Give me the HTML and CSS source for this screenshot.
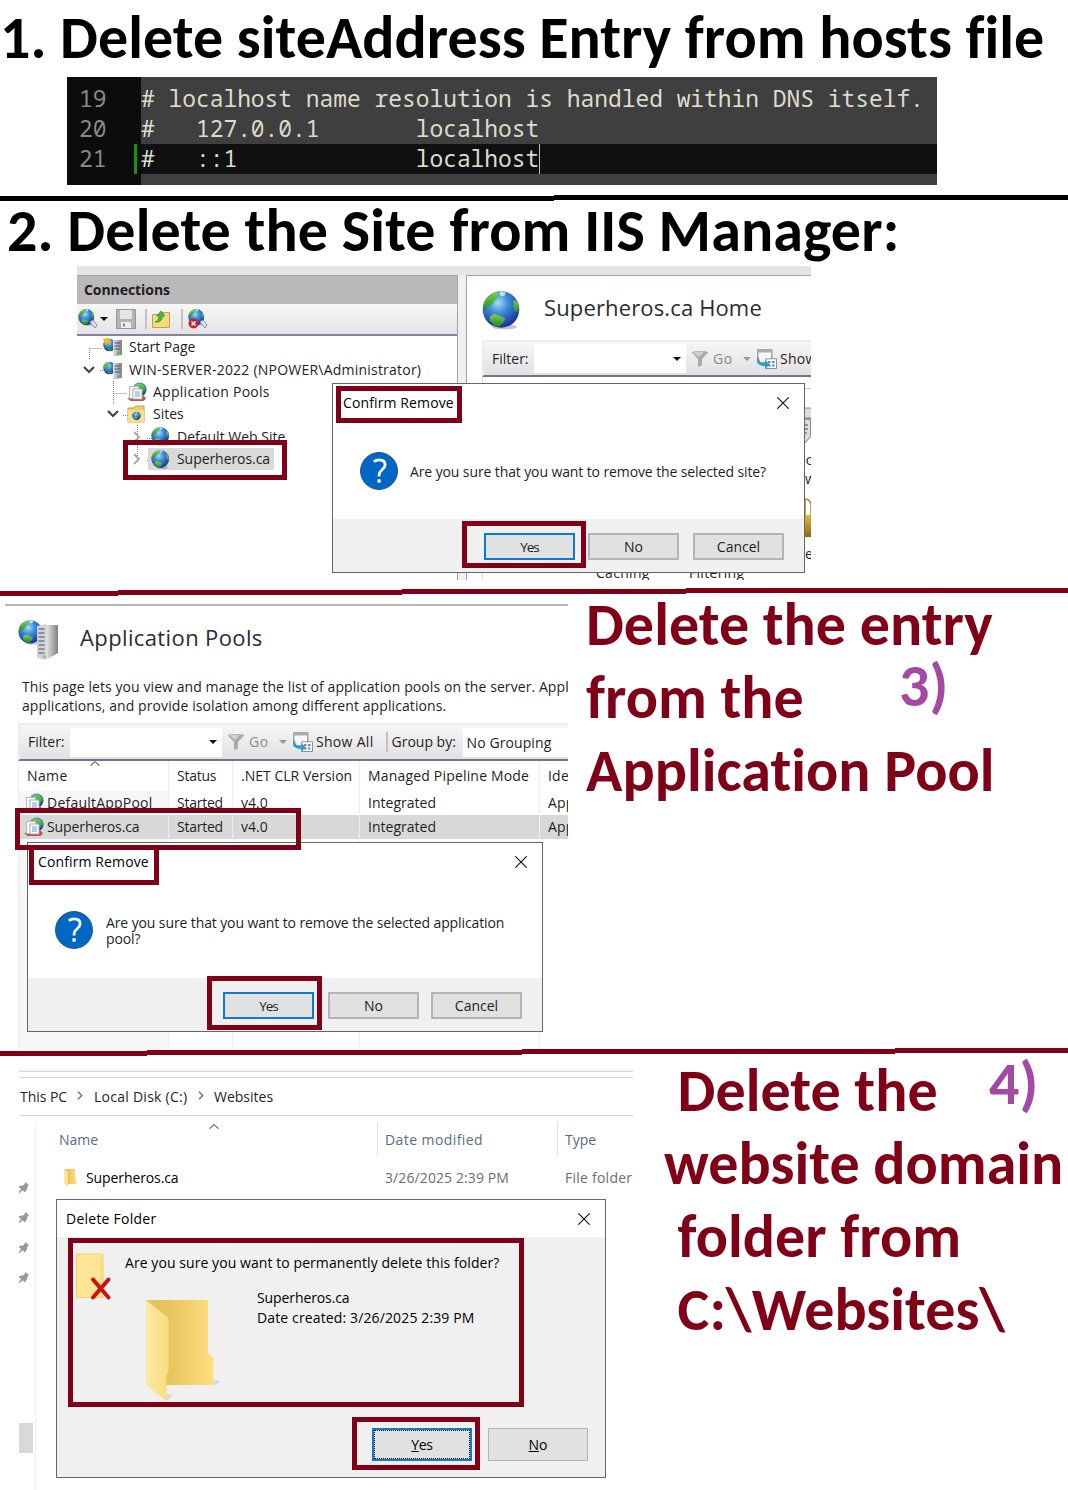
FILE: index.html
```html
<!DOCTYPE html>
<html lang="en">
<head>
<meta charset="utf-8">
<title>Removing an IIS site</title>
<link rel="stylesheet" href="styles.css">
</head>
<body>
<svg class="defs" width="0" height="0" aria-hidden="true">
  <defs>
    <radialGradient id="sea" cx="42%" cy="32%" r="68%"><stop offset="0" stop-color="#a8dcf8"/><stop offset=".4" stop-color="#3f8fdc"/><stop offset="1" stop-color="#1a2f98"/></radialGradient>
    <linearGradient id="land" x1="0" y1="0" x2="0" y2="1"><stop offset="0" stop-color="#7ed050"/><stop offset="1" stop-color="#1f8a2c"/></linearGradient>
    <linearGradient id="metal" x1="0" y1="0" x2="1" y2="0"><stop offset="0" stop-color="#e4e6e6"/><stop offset="1" stop-color="#7d8286"/></linearGradient>
    <linearGradient id="foldBack" x1="0" y1="0" x2="1" y2="0"><stop offset=".3" stop-color="#e5c35c"/><stop offset="1" stop-color="#ffe07f"/></linearGradient>
    <linearGradient id="foldFront" x1="0" y1="0" x2="1" y2="0"><stop offset="0" stop-color="#ffe9a4"/><stop offset="1" stop-color="#fbdc7c"/></linearGradient>
    <linearGradient id="lock" x1="0" y1="0" x2="0" y2="1"><stop offset="0" stop-color="#e0b83c"/><stop offset="1" stop-color="#8d6a10"/></linearGradient>
    <symbol id="globe" viewBox="0 0 38 38">
      <ellipse cx="22" cy="35" rx="12" ry="2.5" fill="#000" opacity=".22"/>
      <circle cx="18.500" cy="18" r="17.800" fill="url(#sea)"/>
      <path d="M1.500 13C3 7 8 2.500 14 1l2.500 1.500L14 5l1 2-3.500 3-2 3.500-4 1L3 19l-2-1z" fill="url(#land)"/>
      <path d="M17 .4l6 1-1 3-3 1-2-2z" fill="#c5e8d0"/>
      <path d="M31 9l2.500 1c2.500 4 3 8 1.500 11l-3-1-1.500-4z" fill="url(#land)"/>
      <path d="M7.500 25l4-2.800 6 1.800 5.500 3.500-2.500 3.500-3.500 3.500-4.500-.5-5-5.500z" fill="url(#land)"/>
    </symbol>
    <symbol id="server" viewBox="0 0 20 20">
      <circle cx="6.500" cy="8" r="6.300" fill="url(#sea)"/>
      <path d="M1 6c1-3 4-4.500 6-4L5 5l1 2-3 3zM4 12l3-1 2 1-1 2-2 0z" fill="url(#land)"/>
      <path d="M10 3h9v15l-9 1.500z" fill="url(#metal)"/>
      <path d="M11.500 6h6M11.500 9h6M11.500 12h6" stroke="#55595c" stroke-width="1"/>
      <path d="M14 15.500h2.500v2H14z" fill="#3cc03c"/>
    </symbol>
    <symbol id="pool" viewBox="0 0 20 20">
      <circle cx="12.500" cy="7.500" r="7" fill="url(#sea)"/>
      <path d="M12 1l5 2 2 4-3 4-2-4-3-2zM7 3l3-2 1 3-3 3z" fill="url(#land)"/>
      <path d="M.5 16.500l4-3h12l2.500 3-2.500 2.500h-13z" fill="#c4504a"/>
      <path d="M2.500 4.500h9v12h-9z" fill="#f6f8fa" stroke="#b4bcc6"/>
      <path d="M6 7h9v10H6z" fill="#fff" stroke="#a4aebb"/>
      <path d="M8 10h5M8 12h5M8 14h5" stroke="#6e9ad0"/>
    </symbol>
    <symbol id="funnel" viewBox="0 0 18 18">
      <path d="M.5 2C3 .5 15 .5 17.500 2L11 9v6.500L7 17V9z" fill="#a9a9a9"/><path d="M2 2.300C5 1.200 11 1.300 13 2L8 7z" fill="#cfcfcf"/>
    </symbol>
    <symbol id="showall" viewBox="0 0 20 20">
      <path d="M.8.8h14v13H.8z" fill="#fafafa" stroke="#8b9096" stroke-width="1.200"/><path d="M1 1h14v2.500H1z" fill="#a9adb3"/>
      <path d="M8.800 9.800h10.700v9.700H8.800z" fill="#fff" stroke="#8b9096"/><path d="M11 13h2.500M15 13h2.500M11 16.500h2.500M15 16.500h2.500" stroke="#7382c0" stroke-width="1.800"/>
      <path d="M2 8c0 5 2 6 6 6v-3l5 4.500L8 20v-3C2 17 0 14 .5 9z" fill="#2f9ad4"/>
    </symbol>
    <symbol id="question" viewBox="0 0 38 38">
      <circle cx="19" cy="19" r="18.500" fill="#0067c5" stroke="#1b4f85" stroke-width=".9"/>
      <path d="M13.800 9.800c1.500-1.300 3.400-1.900 5.400-1.900 3.600 0 5.900 1.900 5.900 4.900 0 5-6 5-6 10.100v1.500" fill="none" stroke="#fff" stroke-width="2.800"/><path d="M17.400 27.300h3.300v3.300h-3.300z" fill="#fff"/>
    </symbol>
    <symbol id="close" viewBox="0 0 12 12"><path d="M.3.3l11.400 11.400M11.700.3L.3 11.700" stroke="#111" stroke-width="1.100" fill="none"/></symbol>
    <symbol id="open" viewBox="0 0 12 8"><path d="M1 1l5 5 5-5" fill="none" stroke="#444" stroke-width="2.200"/></symbol>
    <symbol id="closed" viewBox="0 0 8 12"><path d="M1 1l5 5-5 5" fill="none" stroke="#a8a8a8" stroke-width="1.800"/></symbol>
    <symbol id="crumb" viewBox="0 0 6 9"><path d="M1 .8l3.700 3.700L1 8.200" fill="none" stroke="#777" stroke-width="1.500"/></symbol>
    <symbol id="pin" viewBox="0 0 10 12"><path d="M6.500 0L10 3.300 8.600 4.200 7.800 7.600 5.800 10.500 3.600 8.300 0 11.500V9.700L2 7 0 5.300V4.200L5 3z" fill="#8f9ba3"/></symbol>
    <symbol id="sort" viewBox="0 0 10 5"><path d="M.5 4.700L5 .7l4.500 4" fill="none" stroke="#666" stroke-width="1.100"/></symbol>
    <symbol id="folder" viewBox="0 0 76 102">
      <path d="M67.500 80l7 1-4 3.500-3 .5zM20.500 94l6 .5-3 4-3 2.500z" fill="#000" opacity=".1"/>
      <path d="M0 0h62v53l5.500 5v27H20z" fill="url(#foldBack)"/>
      <path d="M0 0l22.500 18v54l-2 4v25L0 85z" fill="url(#foldFront)"/>
    </symbol>
  </defs>
</svg>

<main class="guide">
  <section class="step step-hosts">
    <h1 class="headline first">1. Delete siteAddress Entry from hosts file</h1>
    <div class="editor">
      <div class="line"><span class="num">19</span><code># localhost name resolution is handled within DNS itself.</code></div>
      <div class="line"><span class="num">20</span><code>#   127.0.0.1       localhost</code></div>
      <div class="line current"><span class="num">21</span><code>#   ::1             localhost<i class="caret"></i></code></div>
      <div class="line rest"><span class="num"></span><code></code></div>
    </div>
  </section>

  <svg class="rule rule-thin" viewBox="0 0 1068 6"><path d="M0 1h554V0h514v5H554v1H0z"/></svg>

  <section class="step step-site">
    <h1 class="headline tight">2. Delete the Site from IIS Manager:</h1>
    <div class="shot iis">
      <div class="iis-top"></div>
      <div class="iis-body">
        <div class="connections">
          <div class="pane-title">Connections</div>
          <div class="pane-tools">
            <svg class="t-globe" viewBox="0 0 20 20"><use href="#globe" width="17" height="17"/><path d="M12 13l3-2 4 5-2 3z" fill="#dfe6ea" stroke="#8494a0"/></svg>
            <i class="drop"></i>
            <svg class="t-save" viewBox="0 0 20 20"><path d="M.5.5h19v19H.5z" fill="#b3b3b3" stroke="#969696"/><path d="M4 1h12v9H4z" fill="#e6e6e6"/><path d="M5 13h10v6H5z" fill="#ededed"/><path d="M7 14.500h2v3H7z" fill="#888"/></svg>
            <i class="split"></i>
            <svg class="t-up" viewBox="0 0 18 18"><path d="M.5 4.500h8l1-2h8v15H.5z" fill="#f6da7e" stroke="#c3a045"/><path d="M3 12C6 11 7 8 7 6H4.500L9 1l4 5h-2.500c0 4-3 7-7.500 6z" fill="#43b649" stroke="#25802c" stroke-width=".6"/></svg>
            <i class="split wide"></i>
            <svg class="t-stop" viewBox="0 0 20 20"><use href="#globe" width="17" height="17"/><path d="M12 13l3-2 4 5-2 3z" fill="#dfe6ea" stroke="#8494a0"/><circle cx="5.500" cy="14.500" r="5" fill="#cf1f27"/><path d="M3.500 12.500l4 4m0-4l-4 4" stroke="#fff" stroke-width="1.500"/></svg>
          </div>
          <div class="tree">
            <svg class="tree-lines" viewBox="0 0 110 135"><path d="M12.500 12v12M12.500 12.500H26M23 34.500h4M36.500 45v24M36.500 57.500H50M46 79.500h5M60.500 89v38M70 102.500h5M70 124.500h5" fill="none" stroke="#888" stroke-dasharray="1 1"/></svg>
            <div class="node"><span class="twist"></span><svg class="ico" viewBox="0 0 20 20"><use href="#server"/><path d="M0 1l3 1 2-2 1 3 3 1-3 2-3 2-2-3z" fill="#f3b52b"/></svg><span>Start Page</span></div>
            <div class="node"><svg class="twist"><use href="#open" y="2" width="12" height="8"/></svg><svg class="ico"><use href="#server"/></svg><span class="wide2">WIN-SERVER-2022 (NPOWER\Administrator)</span></div>
            <div class="node lv1"><span class="twist"></span><svg class="ico"><use href="#pool"/></svg><span class="wide3">Application Pools</span></div>
            <div class="node lv1"><svg class="twist"><use href="#open" y="2" width="12" height="8"/></svg><svg class="ico" viewBox="0 0 20 20"><path d="M1 4h6l1.500-2H17v16H1z" fill="#f0cd6a" stroke="#c8a040"/><path d="M1 6h16v12H1z" fill="#f9df90"/><use href="#globe" x="5" y="7.500" width="9" height="9"/></svg><span>Sites</span></div>
            <div class="node lv2"><svg class="twist"><use href="#closed" x="2" width="8" height="12"/></svg><svg class="ico"><use href="#globe"/></svg><span>Default Web Site</span></div>
            <div class="node lv2 picked"><svg class="twist"><use href="#closed" x="2" width="8" height="12"/></svg><svg class="ico"><use href="#globe"/></svg><span>Superheros.ca</span></div>
          </div>
        </div>
        <div class="home">
          <div class="home-head"><svg class="big-globe"><use href="#globe"/></svg><span class="title t-home">Superheros.ca Home</span></div>
          <div class="filter home-filter">
            <span class="f-label">Filter:</span><span class="f-input"><i class="drop"></i></span>
            <svg class="f-funnel"><use href="#funnel"/></svg><span class="f-go">Go</span><i class="drop dim"></i>
            <svg class="f-show"><use href="#showall"/></svg><span class="f-all">Show</span>
          </div>
          <div class="features">
            <span class="feat c1">Caching</span><span class="feat c2">Filtering</span>
            <span class="edge e1">ec</span><span class="edge e2">w</span><span class="edge e3">e</span>
            <svg class="edge-art" viewBox="0 0 7 160"><path d="M0 1.500h7" stroke="#c8c8d4"/><path d="M0 21h7v28L0 57z" fill="#dcdedf"/><path d="M0 32h6M0 38h3M0 42h3M0 46h2" stroke="#4a4a4a" stroke-width="1.200"/><path d="M0 21h7M0 31h7M5.500 33v16L0 56" stroke="#8a8a8a" fill="none"/><path d="M0 130V112q5 0 6 6v12" fill="#fff" stroke="#a5882a" stroke-width="1.500"/><path d="M0 128h7v22H0z" fill="url(#lock)"/></svg>
          </div>
        </div>
      </div>

      <div class="dialog dlg-site">
        <div class="dlg-title"><span class="wide1">Confirm Remove</span><svg class="x"><use href="#close"/></svg></div>
        <div class="dlg-body"><svg class="q"><use href="#question"/></svg><p>Are you sure that you want to remove the selected site?</p></div>
        <div class="dlg-foot"><span class="btn default yes">Yes</span><span class="btn no">No</span><span class="btn">Cancel</span></div>
      </div>
      <i class="mark m-tree"></i><i class="mark m-title"></i><i class="mark m-yes"></i>
    </div>
  </section>

  <svg class="rule" viewBox="0 0 1068 8"><path fill="#800018" d="M0 3h118V2h284V1h284V0h382v5H686v1H402v1H118v1H0z"/></svg>

  <section class="step step-pool">
    <div class="shot pools">
      <div class="pools-head"><svg class="pool-logo" viewBox="0 0 42 42"><use href="#globe" width="25" height="25"/><path d="M19 6l9-2v36l-9-2z" fill="#cfd3d5"/><path d="M28 5h12v28l-12 7z" fill="url(#metal)"/><path d="M20.500 9h6M20.500 13h6M20.500 17h6M20.500 21h6M20.500 25h6M20.500 29h6M20.500 33h6" stroke="#777d82" stroke-width="1.300"/><path d="M25 35l3 1v2l-3-1z" fill="#6bd03c"/></svg><span class="title t-pools">Application Pools</span></div>
      <p class="about">This page lets you view and manage the list of application pools on the server. Appl<br><span>applications, and provide isolation among different applications.</span></p>
      <div class="filter pool-filter">
        <span class="f-label">Filter:</span><span class="f-input"><i class="drop"></i></span>
        <svg class="f-funnel"><use href="#funnel"/></svg><span class="f-go">Go</span><i class="drop dim"></i>
        <svg class="f-show"><use href="#showall"/></svg><span class="f-all">Show All</span>
        <i class="split"></i><span class="f-group">Group by:</span><span class="f-combo">No Grouping</span>
      </div>
      <div class="table">
        <svg class="sorted"><use href="#sort"/></svg>
        <div class="tr th"><span class="n">Name</span><span class="s">Status</span><span class="v">.NET CLR Version</span><span class="m">Managed Pipeline Mode</span><span>Ide</span></div>
        <div class="tr"><span class="nm"><svg class="ico"><use href="#pool"/></svg><b class="wide3">DefaultAppPool</b></span><span class="s">Started</span><span class="v">v4.0</span><span class="i">Integrated</span><span>App</span></div>
        <div class="tr on"><span class="nm"><svg class="ico"><use href="#pool"/></svg><b>Superheros.ca</b></span><span class="s">Started</span><span class="v">v4.0</span><span class="i">Integrated</span><span>App</span></div>
        <div class="tr fill"><span></span><span></span><span></span><span></span><span></span></div>
      </div>
      <div class="dialog dlg-pool">
        <div class="dlg-title"><span class="wide1">Confirm Remove</span><svg class="x"><use href="#close"/></svg></div>
        <div class="dlg-body"><svg class="q"><use href="#question"/></svg><p>Are you sure that you want to remove the selected application<br>pool?</p></div>
        <div class="dlg-foot"><span class="btn default yes">Yes</span><span class="btn no">No</span><span class="btn">Cancel</span></div>
      </div>
      <i class="mark m-row"></i><i class="mark m-title"></i><i class="mark m-yes"></i>
    </div>
    <h2 class="headline side">Delete the entry
from the
Application Pool</h2>
    <span class="headline badge b3">3)</span>
  </section>

  <svg class="rule" viewBox="0 0 1068 8"><path fill="#800018" d="M0 3h147V2h375V1h373V0h173v5H895v1H522v1H147v1H0z"/></svg>

  <section class="step step-folder">
    <div class="shot explorer">
      <div class="bar"></div>
      <div class="crumbs"><span class="k1">This PC</span><svg><use href="#crumb"/></svg><span class="k2">Local Disk (C:)</span><svg><use href="#crumb"/></svg><span class="k3">Websites</span></div>
      <div class="ex-body">
        <div class="nav">
          <svg><use href="#pin"/></svg><svg><use href="#pin"/></svg><svg><use href="#pin"/></svg><svg><use href="#pin"/></svg>
          <i class="thumb"></i>
        </div>
        <div class="files">
          <svg class="sorted"><use href="#sort"/></svg>
          <div class="fr fh"><span>Name</span><span class="dm">Date modified</span><span>Type</span></div>
          <div class="fr"><span class="fname"><svg viewBox="0 0 13 17"><path d="M0 0h11v9l1.500 1.500V15H0z" fill="url(#foldBack)"/><path d="M0 0l4 2.500V17L0 15z" fill="url(#foldFront)"/></svg>Superheros.ca</span><span class="dt">3/26/2025 2:39 PM</span><span class="ty">File folder</span></div>
        </div>
      </div>
      <div class="dialog dlg-folder">
        <div class="dlg-title"><span class="dtitle">Delete Folder</span><svg class="x"><use href="#close"/></svg></div>
        <div class="confirm">
          <svg class="del" viewBox="0 0 36 48"><path d="M.5 1h26.500v43.500H.5z" fill="#ffe594" stroke="#ecd072"/><path d="M24 1h3v18l1 2v23h-4z" fill="#f9de82"/><path d="M17 26.500l15.500 18M32.500 26.500L17 44.500" stroke="#cc1018" stroke-width="4" stroke-linecap="round"/></svg>
          <p class="ask">Are you sure you want to permanently delete this folder?</p>
          <svg class="fold"><use href="#folder"/></svg>
          <p class="meta">Superheros.ca<br><span>Date created: 3/26/2025 2:39 PM</span></p>
        </div>
        <div class="dlg-foot"><span class="btn default dotted"><u>Y</u>es</span><span class="btn"><u>N</u>o</span></div>
      </div>
      <i class="mark m-info"></i><i class="mark m-yes"></i>
    </div>
    <h2 class="headline side"> Delete the
website domain
 folder from
 C:\Websites\</h2>
    <span class="headline badge b4">4)</span>
  </section>
</main>
</body>
</html>
```
FILE: styles.css
```css
* { box-sizing: border-box; }
body { margin: 0; background: #fff; color: #1e1e1e; font: 14px/20px "Open Sans", "Noto Sans", sans-serif; font-variant-ligatures: none; }
p { margin: 0; }
svg { display: block; flex: none; overflow: hidden; }
i { display: block; flex: none; font-style: normal; }
.defs { position: absolute; }
.guide { width: 1068px; height: 1490px; overflow: hidden; display: flex; flex-direction: column; }
.step { position: relative; flex: none; }
.step-hosts { height: 195px; }
.step-site { height: 387px; }
.step-pool { height: 452px; display: flex; align-items: flex-start; }
.step-folder { height: 434px; display: flex; align-items: flex-start; }
.rule { width: 1068px; height: 8px; flex: none; }
.rule-thin { height: 6px; }

.headline { margin: 0; color: #000; font: bold 60px/73px Calibri, Carlito, Lato, sans-serif; font-variant-ligatures: none; white-space: pre; }
.headline.first { padding-top: 1px; letter-spacing: .04px; }
.headline.tight { height: 57px; padding: 1px 0 0 7px; line-height: 57px; letter-spacing: .12px; }
.headline.side { color: #800018; letter-spacing: .05px; }
.step-pool .side { margin: -8px 0 0 18px; }
.step-folder .side { margin: -2px 0 0 31px; }
.headline.badge { position: absolute; color: #a349a4; }
.b3 { left: 899px; top: 53px; }
.b4 { left: 989px; top: -9px; }

/* Text editor */
.editor { width: 870px; height: 108px; margin: 3px 0 0 67px; padding-top: 7px; display: flex; flex-direction: column; background: linear-gradient(90deg, #0c0c0c 74px, #3f3f3f 74px); font: 22.9px/30px "Noto Sans Mono", "DejaVu Sans Mono", monospace; }
.line { display: flex; height: 30px; }
.line.rest { height: 11px; }
.num { width: 70px; padding-left: 12px; color: #8a8a8a; }
.line code { flex: 1; display: flex; padding-left: 4px; color: #dcdccc; font: inherit; white-space: pre; }
.current .num { border-right: 3px solid #12940f; }
.current code { background: linear-gradient(90deg, transparent 4px, #101010 4px); }
.caret { width: 1px; height: 30px; background: #b4c4b4; }

/* Shared pieces */
.shot { position: relative; overflow: hidden; flex: none; }
.drop { width: 0; border: solid transparent; border-width: 4px 4px 0; border-top-color: #111; }
.drop.dim { border-top-color: #999; }
.split { width: 2px; height: 20px; background: #c4c2b8; }
.ico { width: 20px; height: 20px; }
.title { font-size: 22px; line-height: 30px; color: #2b2b33; padding-bottom: 3px; }
.t-home { letter-spacing: .14px; }
.t-pools { letter-spacing: .38px; }
.wide1 { letter-spacing: .12px; }
.wide2 { letter-spacing: .22px; }
.wide3 { letter-spacing: .27px; }
.mark { position: absolute; border: 5px solid #800018; }

.filter { display: flex; align-items: center; background: linear-gradient(#f7f6f7, #e2e0e2); border: solid; border-width: 2px 0 2px 2px; border-color: #ececee #ececee #74748e; white-space: nowrap; }
.f-label { width: 50px; padding-left: 8px; }
.f-input { width: 152px; height: 29px; padding-right: 5px; background: #fff; display: flex; align-items: center; justify-content: flex-end; }
.f-funnel { width: 18px; height: 18px; margin-left: 5px; }
.f-go { width: 20px; margin: 0 10px 0 4px; color: #8a8a8a; letter-spacing: .6px; }
.f-show { width: 20px; height: 20px; margin-left: 6px; }
.f-all { margin-left: 3px; letter-spacing: .3px; }

/* IIS manager */
.iis { width: 734px; height: 314px; margin: 8px 0 0 77px; display: flex; flex-direction: column; }
.iis-top { height: 9px; background: #e6e4e6; }
.iis-body { flex: 1; display: flex; background: #f1f0f1; }
.connections { width: 381px; border: solid #a4a2a4; border-width: 1px 1px 0 0; background: #fff; }
.pane-title { height: 28px; padding-left: 7px; background: #bab8ba; font-weight: bold; line-height: 28px; letter-spacing: -.06px; }
.pane-tools { height: 32px; display: flex; align-items: center; background: linear-gradient(#f8f7f8, #e4e2e4); border-bottom: 2px solid #83839a; }
.t-globe { width: 20px; height: 20px; margin-left: 1px; }
.pane-tools .drop { margin-left: 2px; }
.t-save { width: 20px; height: 20px; margin-left: 8px; }
.pane-tools .split { margin-left: 9px; }
.t-up { width: 18px; height: 18px; margin-left: 5px; }
.pane-tools .split.wide { margin-left: 11px; }
.t-stop { width: 20px; height: 20px; margin-left: 5px; }
.tree { position: relative; }
.tree-lines { position: absolute; left: 0; top: 0; width: 110px; height: 135px; }
.node { position: relative; height: 22.4px; padding-left: 6px; display: flex; align-items: center; white-space: nowrap; }
.lv1 { padding-left: 30px; }
.lv2 { padding-left: 54px; }
.twist { width: 12px; height: 12px; margin-right: 8px; }
.node .ico { margin-right: 6px; }
.picked .ico { position: relative; }
.picked::before { content: ""; position: absolute; left: 71px; top: 0; width: 126px; height: 22.4px; background: #d9d9d9; }
.picked span { position: relative; letter-spacing: -.06px; }
.lv2 .ico { width: 19px; height: 19px; margin-right: 7px; }
.home { flex: 1; min-width: 0; margin-left: 8px; border: solid #a4a2a4; border-width: 1px 0 0 1px; background: #fff; overflow: hidden; }
.home-head { height: 64px; padding-left: 15px; display: flex; align-items: center; }
.big-globe { width: 39px; height: 39px; margin-top: 5px; }
.home-head .title { margin-left: 23px; }
.home-filter { width: 400px; height: 37px; margin-left: 15px; }
.features { position: relative; height: 203px; margin-left: 15px; border-left: 1px solid #dcdce4; }
.feat { position: absolute; top: 186px; letter-spacing: .3px; }
.c1 { left: 113px; }
.c2 { left: 206px; }
.edge { position: absolute; left: 322px; }
.e1 { left: 315px; top: 73px; }
.e2 { top: 92px; }
.e3 { top: 167px; }
.edge-art { position: absolute; left: 322px; top: 10px; width: 7px; height: 160px; }

/* Message boxes */
.dialog { position: absolute; display: flex; flex-direction: column; background: #fff; border: 1px solid #666; }
.dlg-title { height: 37px; flex: none; padding: 0 15px 0 10px; display: flex; align-items: center; justify-content: space-between; color: #000; }
.x { width: 12px; height: 12px; margin-top: 1px; }
.dlg-body { flex: 1; display: flex; align-items: center; gap: 12px; padding: 1px 0 0 27px; line-height: 16px; letter-spacing: -.11px; white-space: nowrap; }
.dlg-body p { padding-top: 3px; }
.q { width: 38px; height: 38px; }
.dlg-foot { height: 53px; flex: none; padding: 1px 20px 0 0; display: flex; align-items: center; justify-content: flex-end; gap: 13px; background: #f0f0f0; }
.btn { width: 91px; height: 27px; padding-top: 1px; border: 2px solid #b4b4b4; background: #e1e1e1; display: flex; align-items: center; justify-content: center; }
.btn.default { border-color: #0f78d0; }
.btn.yes { font-size: 13.5px; letter-spacing: -1px; }
.dlg-site .no { margin-right: 1px; }
.dlg-pool .no { margin-right: -1px; }
.dlg-pool .yes { margin-right: 1px; }
.dlg-site { left: 255px; top: 117px; width: 473px; height: 190px; }
.dlg-pool { left: 22px; top: 238px; width: 516px; height: 190px; }
.iis .m-tree { left: 46px; top: 174px; width: 164px; height: 40px; }
.iis .m-title { left: 259px; top: 120px; width: 126px; height: 37px; }
.iis .m-yes { left: 385px; top: 255px; width: 124px; height: 47px; }

/* Application pools */
.pools { width: 563px; height: 445px; margin: 8px 0 0 5px; border-top: 2px solid #b9b8b4; display: flex; flex-direction: column; }
.pools-head { height: 64px; flex: none; padding-left: 13px; display: flex; align-items: center; }
.pool-logo { width: 42px; height: 42px; margin-top: 6px; }
.pools-head .title { margin-left: 20px; }
.about { height: 53px; flex: none; padding: 7px 0 0 17px; line-height: 19px; letter-spacing: .08px; white-space: nowrap; }
.about span { letter-spacing: .09px; }
.pool-filter { height: 38px; flex: none; margin-left: 13px; }
.pool-filter .split { margin-left: 12px; }
.f-group { width: 71px; margin-left: 4px; }
.f-combo { flex: 1; height: 29px; padding-left: 4px; background: #fff; line-height: 30px; letter-spacing: .1px; }
.table { position: relative; flex: 1; margin-left: 13px; border-left: 1px solid #f4e8e8; display: flex; flex-direction: column; }
.tr { height: 24px; flex: none; display: grid; grid-template-columns: 150px 64px 127px 180px 28px; align-items: stretch; line-height: 24px; white-space: nowrap; }
.tr > span { padding-left: 8px; border-right: 1px solid #eceef4; overflow: hidden; letter-spacing: .2px; }
.tr > span:last-child { border-right: 0; }
.tr > .s { letter-spacing: -.25px; }
.tr > .i, .tr > .v { letter-spacing: .02px; }
.tr > .m { letter-spacing: .18px; }
.tr > .n { letter-spacing: .4px; }
.tr b { font-weight: normal; letter-spacing: -.1px; }
.tr b.wide3 { letter-spacing: .22px; }
.tr > .nm { padding-left: 5px; display: flex; align-items: center; gap: 3px; background: #f6f6f7; }
.tr.th { height: 30px; line-height: 30px; }
.tr.on, .tr.on > .nm { background: #d8d8d8; }
.tr.fill { flex: 1; }
.tr.fill > span:first-child { background: #f7f7f8; }
.table .sorted { position: absolute; left: 71px; top: 0; width: 10px; height: 5px; }
.dlg-pool .dlg-body { gap: 13px; }
.pools .dialog { top: 236px; }
.pools .m-row { left: 10px; top: 202px; width: 286px; height: 42px; }
.pools .m-title { left: 24px; top: 239px; width: 130px; height: 40px; }
.pools .m-yes { left: 202px; top: 370px; width: 115px; height: 54px; }

/* File explorer */
.explorer { width: 614px; height: 421px; margin: 13px 0 0 19px; display: flex; flex-direction: column; }
.bar { height: 9px; flex: none; background: linear-gradient(#f4f4f4 2px, #d6d6d6 2px 3px, #fff 3px 8px, #d6d6d6 8px); }
.crumbs { height: 38px; flex: none; padding-left: 1px; display: flex; align-items: center; border-bottom: 1px solid #d6d6d6; }
.crumbs svg { width: 6px; height: 9px; margin-top: -2px; }
.k1 { width: 57px; letter-spacing: -.05px; }
.k2 { width: 104px; margin-left: 11px; letter-spacing: .26px; }
.k3 { margin-left: 10px; }
.ex-body { flex: 1; display: flex; padding-top: 6px; }
.nav { position: relative; width: 17px; padding-top: 60px; border-right: 1px solid #f0f0f0; display: flex; flex-direction: column; gap: 18px; }
.nav svg { width: 10px; height: 12px; }
.thumb { margin-top: 121px; width: 14px; height: 30px; background: #d9d9d9; }
.files { position: relative; flex: 1; }
.files .sorted { position: absolute; left: 173px; top: 2px; width: 10px; height: 5px; }
.fr { height: 38px; display: grid; grid-template-columns: 342px 180px 1fr; align-items: center; color: #6d6d6d; white-space: nowrap; }
.fr > span { padding-left: 7px; }
.fh { height: 33px; margin-bottom: 4px; color: #5b6b7e; line-height: 35px; }
.fr.fh > span { height: 33px; border-right: 1px solid #e2e2e2; }
.fr > span:first-child { padding-left: 23px; }
.fr.fh > span:last-child { border-right: 0; }
.fh .dm { letter-spacing: .42px; }
.fr .dt { letter-spacing: .1px; }
.fr .ty { letter-spacing: .24px; }
.fr > span.fname { display: flex; align-items: center; gap: 9px; color: #000; padding-left: 28px; letter-spacing: -.1px; }
.fname svg { width: 13px; height: 17px; margin-top: -2px; }
.dlg-folder { left: 37px; top: 130px; width: 550px; height: 279px; background: #f0f0f0; color: #000; }
.dlg-folder .dlg-title { background: #fff; padding-left: 9px; }
.dlg-folder .x { margin-top: 0; }
.dtitle { letter-spacing: .24px; }
.confirm { flex: 1; display: grid; grid-template-columns: 68px 133px 1fr; grid-template-rows: 60px 1fr; padding-top: 4px; }
.del { width: 36px; height: 48px; margin: 12px 0 0 19px; }
.ask { grid-column: 2 / 4; padding-top: 12px; letter-spacing: .07px; }
.fold { grid-column: 1 / 3; width: 76px; height: 102px; margin: -1px 0 0 89px; }
.meta { margin-left: -1px; margin-top: -13px; letter-spacing: -.1px; }
.meta span { letter-spacing: .13px; }
.dlg-folder .dlg-foot { height: 66px; padding: 0 17px 0 0; gap: 16px; }
.dlg-folder .btn { width: 100px; height: 33px; border-width: 1px; }
.dlg-folder .btn.default { border-width: 2px; outline: 1px dotted #000; outline-offset: -3px; letter-spacing: -.3px; }
.explorer .m-info { left: 49px; top: 169px; width: 456px; height: 169px; }
.explorer .m-yes { left: 333px; top: 348px; width: 128px; height: 53px; }
```
